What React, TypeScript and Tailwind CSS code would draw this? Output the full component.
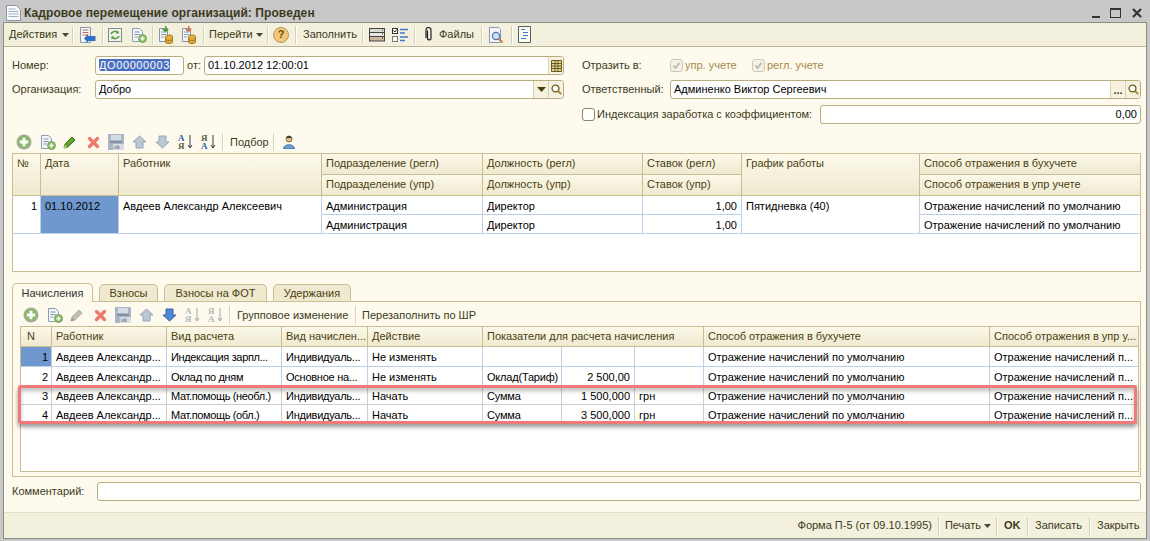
import React from "react";

const font = "font-['Liberation_Sans',Arial,sans-serif]";

function Sep() {
  return <div className="h-[18px] w-px shrink-0 bg-[#d8d2b4] shadow-[1px_0_0_#fff]" />;
}

function Caret() {
  return (
    <svg width="7" height="4" viewBox="0 0 7 4" className="ml-[3px] shrink-0">
      <path d="M0 0h7L3.5 4z" fill="#4a4430" />
    </svg>
  );
}

function AddIcon({ size = 16 }: { size?: number }) {
  return (
    <svg width={size} height={size} viewBox="0 0 16 16" className="shrink-0">
      <circle cx="8" cy="8" r="7.5" fill="#a5a99a" />
      <circle cx="8" cy="8" r="5.8" fill="#86bd5c" />
      <path d="M6.6 3.8h2.8v2.8h2.8v2.8H9.4v2.8H6.6V9.4H3.8V6.6h2.8z" fill="#fff" />
    </svg>
  );
}

function CopyIcon() {
  return (
    <svg width="16" height="16" viewBox="0 0 16 16" className="shrink-0">
      <path d="M1.5 1.5h7l3 3v10h-10z" fill="#f4f6fa" stroke="#8d9bb0" />
      <path d="M3.5 5h5M3.5 7.5h5M3.5 10h3" stroke="#7f93b4" />
      <circle cx="11.5" cy="11.5" r="4" fill="#79b94c" stroke="#8e9f80" />
      <path d="M11.5 9.3v4.4M9.3 11.5h4.4" stroke="#fff" strokeWidth="1.6" />
    </svg>
  );
}

function PencilIcon({ muted = false }: { muted?: boolean }) {
  return (
    <svg width="14" height="14" viewBox="0 0 14 14" className="shrink-0">
      <path d="M1 13l1-4 7-7 3 3-7 7z" fill={muted ? "#c0c0b8" : "#5fa32e"} stroke={muted ? "#a9a99f" : "#3f7d1f"} />
      <path d="M1 13l1-3 2 2z" fill={muted ? "#8f8f88" : "#e8dca0"} />
    </svg>
  );
}

function DeleteIcon() {
  return (
    <svg width="13" height="13" viewBox="0 0 13 13" className="shrink-0">
      <path d="M2.5 2.5l8 8M10.5 2.5l-8 8" stroke="#ee7a6c" strokeWidth="3.4" strokeLinecap="round" />
    </svg>
  );
}

function SaveIcon() {
  return (
    <svg width="16" height="16" viewBox="0 0 16 16" className="shrink-0">
      <rect x="0" y="0" width="16" height="16" fill="#a9b5c5" />
      <rect x="3" y="1" width="10" height="5" fill="#d5dbe3" />
      <rect x="2" y="7" width="12" height="2" fill="#8291a6" />
      <rect x="5" y="10" width="11" height="6" fill="#d6dbe0" />
      <text x="6" y="15" fontSize="5" fontWeight="bold" fill="#75828f">ok</text>
    </svg>
  );
}

function ArrowIcon({ dir, active = false }: { dir: "up" | "down"; active?: boolean }) {
  const fill = active ? "#4f86d6" : "#bcc6d4";
  return (
    <svg width="15" height="14" viewBox="0 0 15 14" className="shrink-0">
      {dir === "up" ? (
        <path d="M7.5 1L14 7h-3v6H4V7H1z" fill={fill} stroke="#9aa6b7" />
      ) : (
        <path d="M7.5 13L14 7h-3V1H4v6H1z" fill={fill} stroke={active ? "#3565ad" : "#9aa6b7"} />
      )}
    </svg>
  );
}

function SortIcon({ reverse = false, muted = false }: { reverse?: boolean; muted?: boolean }) {
  const top = muted ? "text-[#b4b8bd]" : reverse ? "text-[#5a5a3a]" : "text-[#2b5ea8]";
  const bottom = muted ? "text-[#b4b8bd]" : reverse ? "text-[#2b5ea8]" : "text-[#5a5a3a]";
  return (
    <div className="relative flex h-[17px] w-[15px] shrink-0 flex-col font-['Liberation_Serif',serif] text-[9px] font-bold leading-[8px]">
      <span className={top}>{reverse ? "Я" : "А"}</span>
      <span className={bottom}>{reverse ? "А" : "Я"}</span>
      <svg width="6" height="15" viewBox="0 0 6 15" className="absolute right-0 top-px">
        <path d="M3 0v13M1 10l2 3 2-3" stroke={muted ? "#a8a8a0" : "#3d3d3d"} fill="none" />
      </svg>
    </div>
  );
}

function LookupIcon() {
  return (
    <svg width="11" height="11" viewBox="0 0 11 11">
      <circle cx="4.5" cy="4.5" r="3.4" fill="#fff" stroke="#6a5a18" strokeWidth="1.3" />
      <path d="M7 7l3.2 3.2" stroke="#a8862c" strokeWidth="1.8" />
    </svg>
  );
}

function DocArrowIcon() {
  return (
    <svg width="17" height="18" viewBox="0 0 17 18" className="shrink-0">
      <path d="M1.5 1.5h10v15h-10z" fill="#f6f7fb" stroke="#8796ae" />
      <path d="M3.5 4h6M3.5 6.5h6M3.5 9h6" stroke="#c26a50" />
      <path d="M16.5 11v5H9v2l-4-4.500 4-4.500v2z" fill="#2f6fc4" transform="translate(0 -1)" />
    </svg>
  );
}

function RefreshIcon() {
  return (
    <svg width="14" height="14" viewBox="0 0 14 14" className="shrink-0">
      <rect x="0.5" y="0.5" width="13" height="13" fill="#f3f2ea" stroke="#7f8b99" />
      <path d="M3 6a4 4 0 017-1M11 8a4 4 0 01-7 1" stroke="#4e9a35" strokeWidth="1.5" fill="none" />
      <path d="M10.500 2.500v3h-3M3.500 11.500v-3h3" fill="#4e9a35" />
    </svg>
  );
}

function DbDocIcon({ color }: { color: string }) {
  return (
    <svg width="15" height="18" viewBox="0 0 15 18" className="shrink-0">
      <path d="M1.500 2.500h8v13h-8z" fill="#f3f5f9" stroke="#8a97a8" />
      <path d="M3 6h5M3 8.500h5M3 11h3" stroke="#8da0bb" />
      <path d="M7 0v3H4l3.500 3.500L11 3H8.500V0z" fill={color} />
      <ellipse cx="11" cy="10.500" rx="3.500" ry="1.500" fill="#e9b64a" stroke="#a87b22" />
      <path d="M7.500 10.500v5.500c0 2 7 2 7 0v-5.500" fill="#e0a93c" stroke="#a87b22" />
      <path d="M7.500 13c0 2 7 2 7 0" fill="none" stroke="#a87b22" />
    </svg>
  );
}

function HelpIcon() {
  return (
    <div className="flex h-[16px] w-[16px] shrink-0 items-center justify-center rounded-full border border-[#b29a5c] bg-[#f2c777] text-[11px] font-bold leading-none text-[#6a4d10]">
      ?
    </div>
  );
}

function ListIcon() {
  return (
    <svg width="16" height="16" viewBox="0 0 16 16" className="shrink-0">
      <rect x="0.5" y="1.500" width="15" height="4" fill="#d9d9d4" stroke="#444" />
      <rect x="0.5" y="5.500" width="15" height="4" fill="#e8e8e2" stroke="#444" />
      <rect x="0.5" y="9.500" width="15" height="4.500" fill="#c9b99a" stroke="#444" />
      <path d="M13 3h1M13 7h1M13 11h1" stroke="#222" />
    </svg>
  );
}

function CheckListIcon() {
  return (
    <svg width="17" height="16" viewBox="0 0 17 16" className="shrink-0">
      <rect x="0.5" y="1.500" width="5" height="5" fill="#fff" stroke="#333" />
      <path d="M1.500 3.500l1.300 1.500 2-2.500" stroke="#111" fill="none" />
      <rect x="0.5" y="9.500" width="5" height="5" fill="#fff" stroke="#777" />
      <path d="M8 2.500h8M8 6h5M8 10h8M8 13.500h5" stroke="#3f79c9" strokeWidth="1.500" />
    </svg>
  );
}

function ClipIcon() {
  return (
    <svg width="8" height="15" viewBox="0 0 8 15" className="shrink-0">
      <path d="M2.500 3.500v8a1.800 1.800 0 003.500 0V3a2.500 2.500 0 00-5 0v8" fill="none" stroke="#222" strokeWidth="1.200" />
    </svg>
  );
}

function PreviewIcon() {
  return (
    <svg width="16" height="18" viewBox="0 0 16 18" className="shrink-0">
      <path d="M1.500 1.500h9l2 2v13h-11z" fill="#f6f7fb" stroke="#8796ae" />
      <circle cx="8" cy="10" r="3.600" fill="#cfe3f7" stroke="#4a77ad" strokeWidth="1.200" />
      <path d="M10.500 12.500l4 4" stroke="#c67c3c" strokeWidth="2" />
    </svg>
  );
}

function OutlineIcon() {
  return (
    <svg width="13" height="17" viewBox="0 0 13 17" className="shrink-0">
      <path d="M0.500 0.500h12v16h-12z" fill="#fbfbf7" stroke="#55605f" />
      <path d="M3 3.500h4M5 6.500h5M5 9.500h5M3 12.500h5" stroke="#3f79c9" />
    </svg>
  );
}

function PersonIcon() {
  return (
    <svg width="12" height="14" viewBox="0 0 12 14" className="shrink-0">
      <circle cx="6" cy="4" r="3" fill="#e6b98a" stroke="#7d6a4a" />
      <path d="M3 3c1-2.500 5-2.500 6 0z" fill="#3a3220" />
      <path d="M0.500 13.500c0-5 11-5 11 0z" fill="#6f9fd4" stroke="#4f7fb8" />
    </svg>
  );
}

function Field({
  className = "",
  align = "left",
  children,
  selected = false,
  buttons,
}: {
  className?: string;
  align?: "left" | "right";
  children?: React.ReactNode;
  selected?: boolean;
  buttons?: React.ReactNode;
}) {
  return (
    <div className={`flex h-[19px] items-stretch overflow-hidden rounded-[3px] border border-[#b8ad7f] bg-white text-[11px] leading-[17px] text-black ${className}`}>
      <div className={`min-w-0 flex-1 truncate px-[3px] ${align === "right" ? "text-right" : ""}`}>
        {selected ? <span className="bg-[#4a6fc0] tracking-[0.6px] text-white">{children}</span> : children}
      </div>
      {buttons}
    </div>
  );
}

function FieldButton({ children }: { children: React.ReactNode }) {
  return (
    <div className="flex w-[15px] shrink-0 items-center justify-center border-l border-[#d8d2b4] bg-[#f6f2df]">
      {children}
    </div>
  );
}

function Check({ checked = false, disabled = false }: { checked?: boolean; disabled?: boolean }) {
  return (
    <div className={`flex h-[13px] w-[13px] shrink-0 items-center justify-center rounded-[3px] border ${disabled ? "border-[#cfcab4] bg-[#f3f1e6]" : "border-[#8b8462] bg-white"}`}>
      {checked && (
        <svg width="9" height="9" viewBox="0 0 9 9">
          <path d="M1.500 4.500l2 2.500 4-5" stroke="#b5b5ab" strokeWidth="1.500" fill="none" />
        </svg>
      )}
    </div>
  );
}

function ItemToolbar({ lower = false }: { lower?: boolean }) {
  return (
    <div className={`flex items-center ${lower ? "h-[24px] pl-[3px] pt-[2px]" : "h-[22px] pl-[4px]"}`}>
      <AddIcon />
      <div className="ml-2"><CopyIcon /></div>
      <div className="ml-[7px]"><PencilIcon muted={lower} /></div>
      <div className="ml-[10px]"><DeleteIcon /></div>
      <div className="ml-2"><SaveIcon /></div>
      <div className="ml-2"><ArrowIcon dir="up" /></div>
      <div className="ml-2"><ArrowIcon dir="down" active={lower} /></div>
      <div className="ml-2"><SortIcon muted={lower} /></div>
      <div className="ml-2"><SortIcon reverse muted={lower} /></div>
      <div className="ml-[6px]"><Sep /></div>
      {lower ? (
        <>
          <span className="ml-[7px] w-[112px] text-[11px] text-[#3a3a20]">Групповое изменение</span>
          <div className="ml-[6px]"><Sep /></div>
          <span className="ml-[6px] text-[11px] text-[#3a3a20]">Перезаполнить по ШР</span>
        </>
      ) : (
        <>
          <span className="ml-[7px] w-[38px] text-[11px] text-[#3a3a20]">Подбор</span>
          <div className="ml-[5px]"><Sep /></div>
          <div className="ml-[9px]"><PersonIcon /></div>
        </>
      )}
    </div>
  );
}

function Head({ className = "", children }: { className?: string; children?: React.ReactNode }) {
  return (
    <div className={`truncate border-r border-b border-[#c9be92] bg-gradient-to-b from-[#fcf9ea] to-[#efe9cf] pl-1 text-[11px] leading-[19px] text-[#4a3f10] ${className}`}>
      {children}
    </div>
  );
}

function Cell({ className = "", children }: { className?: string; children?: React.ReactNode }) {
  return (
    <div className={`overflow-hidden whitespace-nowrap border-r border-b border-[#bdd0e8] bg-white pl-1 pr-1 text-[11px] leading-[20px] text-black ${className}`}>
      {children}
    </div>
  );
}

const upperRows = [
  ["Подразделение (регл)", "Должность (регл)", "Ставок (регл)"],
  ["Подразделение (упр)", "Должность (упр)", "Ставок (упр)"],
];

const lowerRows = [
  { n: "1", kind: "Индексация зарпл...", accr: "Индивидуаль...", act: "Не изменять", ind: "", sum: "", cur: "" },
  { n: "2", kind: "Оклад по дням", accr: "Основное на...", act: "Не изменять", ind: "Оклад(Тариф)", sum: "2 500,00", cur: "" },
  { n: "3", kind: "Мат.помощь (необл.)", accr: "Индивидуаль...", act: "Начать", ind: "Сумма", sum: "1 500,000", cur: "грн" },
  { n: "4", kind: "Мат.помощь (обл.)", accr: "Индивидуаль...", act: "Начать", ind: "Сумма", sum: "3 500,000", cur: "грн" },
];

export default function App() {
  return (
    <div className={`flex h-[541px] w-[1150px] flex-col overflow-hidden bg-[#c8c8c8] px-[3px] pb-[2px] ${font}`}>
      <div className="flex h-[22px] shrink-0 items-center pt-[3px]">
        <svg width="15" height="16" viewBox="0 0 15 16" className="ml-[3px] shrink-0">
          <path d="M0.500 0.500h10l4 4v11h-14z" fill="#f8f9fb" stroke="#8a97a8" />
          <path d="M2.500 4h7M2.500 6.500h10M2.500 9h10M2.500 11.500h10" stroke="#9fb0c6" />
        </svg>
        <span className="ml-[3px] text-[12px] font-bold tracking-[0.08px] text-[#3d3a20]">Кадровое перемещение организаций: Проведен</span>
        <div className="ml-auto mr-[5px] flex items-center gap-[10px]">
          <div className="mt-[8px] h-[2px] w-[8px] bg-[#333]" />
          <div className="h-[10px] w-[11px] border border-t-2 border-[#333]" />
          <svg width="10" height="10" viewBox="0 0 10 10" className="ml-px">
            <path d="M1 1l8 8M9 1l-8 8" stroke="#333" strokeWidth="2.200" />
          </svg>
        </div>
      </div>

      <div className="flex min-h-0 flex-1 flex-col border border-[#8c8c80] bg-[#fefaee]">
        <div className="flex h-[24px] shrink-0 items-center border-b border-[#bdb594] bg-[#f4f0de] pl-[5px] text-[11px] text-[#3a3a20]">
          <span className="w-[50px] shrink-0">Действия</span>
          <Caret />
          <div className="ml-[3px]"><Sep /></div>
          <div className="ml-[6px]"><DocArrowIcon /></div>
          <div className="ml-[6px]"><Sep /></div>
          <div className="ml-[5px]"><RefreshIcon /></div>
          <div className="ml-[9px]"><CopyIcon /></div>
          <div className="ml-[5px]"><Sep /></div>
          <div className="ml-[5px]"><DbDocIcon color="#4e9a35" /></div>
          <div className="ml-[8px]"><DbDocIcon color="#d9744f" /></div>
          <div className="ml-[7px]"><Sep /></div>
          <span className="ml-[5px] w-[44px] shrink-0">Перейти</span>
          <Caret />
          <div className="ml-[4px]"><Sep /></div>
          <div className="ml-[5px]"><HelpIcon /></div>
          <div className="ml-[6px]"><Sep /></div>
          <span className="ml-[7px] w-[53px] shrink-0">Заполнить</span>
          <div className="ml-[6px]"><Sep /></div>
          <div className="ml-[6px]"><ListIcon /></div>
          <div className="ml-[7px]"><CheckListIcon /></div>
          <div className="ml-[5px]"><Sep /></div>
          <div className="ml-[10px]"><ClipIcon /></div>
          <span className="ml-[6px] w-[36px] shrink-0">Файлы</span>
          <div className="ml-[6px]"><Sep /></div>
          <div className="ml-[6px]"><PreviewIcon /></div>
          <div className="ml-[7px]"><Sep /></div>
          <div className="ml-[6px]"><OutlineIcon /></div>
        </div>

        <div className="flex shrink-0 pl-[8px] pr-[5px] pt-[9px] text-[11px] text-[#3a3a20]">
          <div className="w-[552px] shrink-0">
            <div className="flex h-[19px] items-center">
              <span className="w-[83px] shrink-0">Номер:</span>
              <Field selected className="w-[89px]">ДО00000003</Field>
              <span className="ml-[3px] w-[17px] shrink-0">от:</span>
              <Field
                className="w-[360px]"
                buttons={
                  <FieldButton>
                    <svg width="11" height="12" viewBox="0 0 11 12">
                      <path d="M0.500 0.500h10v11h-10zM0.500 3.500h10M0.500 6h10M0.500 8.500h10M4 0.500v11M7 0.500v11" fill="#e7d9a4" stroke="#6a5a18" />
                    </svg>
                  </FieldButton>
                }
              >
                01.10.2012 12:00:01
              </Field>
            </div>
            <div className="mt-[5px] flex h-[19px] items-center">
              <span className="w-[83px] shrink-0">Организация:</span>
              <Field
                className="w-[469px]"
                buttons={
                  <>
                    <FieldButton>
                      <svg width="9" height="5" viewBox="0 0 9 5"><path d="M0 0h9L4.500 5z" fill="#4a3f10" /></svg>
                    </FieldButton>
                    <FieldButton><LookupIcon /></FieldButton>
                  </>
                }
              >
                Добро
              </Field>
            </div>
          </div>
          <div className="ml-[18px] flex-1">
            <div className="flex h-[19px] items-center">
              <span className="w-[88px] shrink-0">Отразить в:</span>
              <Check checked disabled />
              <span className="ml-[2px] w-[67px] shrink-0 text-[#a68a4a]">упр. учете</span>
              <Check checked disabled />
              <span className="ml-[2px] text-[#a68a4a]">регл. учете</span>
            </div>
            <div className="mt-[5px] flex h-[19px] items-center">
              <span className="w-[88px] shrink-0">Ответственный:</span>
              <Field
                className="flex-1"
                buttons={
                  <>
                    <FieldButton><span className="mt-[2px] text-[11px] font-bold leading-none text-[#4a3f10]">...</span></FieldButton>
                    <FieldButton><LookupIcon /></FieldButton>
                  </>
                }
              >
                Админенко Виктор Сергеевич
              </Field>
            </div>
            <div className="mt-[6px] flex h-[19px] items-center">
              <Check />
              <span className="ml-[2px] w-[223px] shrink-0">Индексация заработка с коэффициентом:</span>
              <Field className="flex-1" align="right">0,00</Field>
            </div>
          </div>
        </div>

        <div className="ml-[8px] mr-[5px] mt-[7px] flex shrink-0 flex-col">
          <ItemToolbar />
          <div className="h-[119px] shrink-0 border border-[#c9be92] bg-white">
            <div className="grid grid-cols-[28px_78px_203px_161px_160px_99px_178px_1fr] grid-rows-[21px_21px_19px_19px]">
              <Head className="row-span-2">№</Head>
              <Head className="row-span-2">Дата</Head>
              <Head className="row-span-2">Работник</Head>
              {upperRows[0].map((t) => (
                <Head key={t}>{t}</Head>
              ))}
              <Head className="row-span-2">График работы</Head>
              <Head className="border-r-0">Способ отражения в бухучете</Head>
              {upperRows[1].map((t) => (
                <Head key={t}>{t}</Head>
              ))}
              <Head className="border-r-0">Способ отражения в упр учете</Head>

              <Cell className="row-span-2 pr-[3px] text-right">1</Cell>
              <Cell className="row-span-2 !bg-[#6f98cf] text-[#e8eefa]">01.10.2012</Cell>
              <Cell className="row-span-2">Авдеев Александр Алексеевич</Cell>
              <Cell>Администрация</Cell>
              <Cell>Директор</Cell>
              <Cell className="text-right">1,00</Cell>
              <Cell className="row-span-2">Пятидневка (40)</Cell>
              <Cell className="border-r-0">Отражение начислений по умолчанию</Cell>
              <Cell>Администрация</Cell>
              <Cell>Директор</Cell>
              <Cell className="text-right">1,00</Cell>
              <Cell className="border-r-0">Отражение начислений по умолчанию</Cell>
            </div>
          </div>
        </div>

        <div className="ml-[8px] mr-[5px] mt-[11px] flex shrink-0 flex-col">
          <div className="flex h-[18px] items-end gap-[6px] text-[11px] leading-[17px] text-[#4a3f10]">
            <div className="relative z-10 mb-[-1px] h-[19px] w-[81px] rounded-t-[5px] border border-b-0 border-[#c9be92] bg-[#fefaee] pt-px text-center text-[#333]">Начисления</div>
            <div className="h-[17px] w-[59px] rounded-t-[5px] border border-b-0 border-[#c9be92] bg-[#efe9cf] text-center">Взносы</div>
            <div className="h-[17px] w-[103px] rounded-t-[5px] border border-b-0 border-[#c9be92] bg-[#efe9cf] text-center">Взносы на ФОТ</div>
            <div className="h-[17px] w-[78px] rounded-t-[5px] border border-b-0 border-[#c9be92] bg-[#efe9cf] text-center">Удержания</div>
          </div>
          <div className="h-[176px] border border-[#c9be92] pl-[7px] pr-px">
            <ItemToolbar lower />
            <div className="relative h-[146px] border border-[#c9be92] bg-white">
              <div className="grid grid-cols-[31px_115px_115px_86px_115px_79px_73px_69px_286px_1fr] grid-rows-[20px_20px_19px_19px_19px]">
                <Head className="pl-[6px]">N</Head>
                <Head>Работник</Head>
                <Head>Вид расчета</Head>
                <Head>Вид начислен...</Head>
                <Head>Действие</Head>
                <Head className="col-span-3">Показатели для расчета начисления</Head>
                <Head>Способ отражения в бухучете</Head>
                <Head className="border-r-0">Способ отражения в упр у...</Head>
                {lowerRows.map((r, i) => {
                  const line = i >= 2 ? "!border-[#cfcfcf]" : i === 1 ? "!border-b-[#d5d5d5]" : "";
                  return (
                    <React.Fragment key={r.n}>
                      <Cell className={`pr-[3px] text-right ${line} ${i === 0 ? "!bg-[#6f98cf] text-[#e8eefa]" : ""}`}>{r.n}</Cell>
                      <Cell className={line}>Авдеев Александр...</Cell>
                      <Cell className={`tracking-[-0.35px] ${line}`}>{r.kind}</Cell>
                      <Cell className={`tracking-[-0.25px] ${line}`}>{r.accr}</Cell>
                      <Cell className={line}>{r.act}</Cell>
                      <Cell className={`tracking-[-0.2px] ${line}`}>{r.ind}</Cell>
                      <Cell className={`text-right ${line}`}>{r.sum}</Cell>
                      <Cell className={line}>{r.cur}</Cell>
                      <Cell className={line}>Отражение начислений по умолчанию</Cell>
                      <Cell className={`border-r-0 ${line}`}>Отражение начислений п...</Cell>
                    </React.Fragment>
                  );
                })}
              </div>
              <div className="absolute left-[-3px] top-[58px] h-[39px] w-[1119px] rounded-[3px] border-[3px] border-[#f07a78] shadow-[0_3px_4px_rgba(0,0,0,0.4),inset_0_3px_4px_rgba(0,0,0,0.25)]" />
            </div>
          </div>
        </div>

        <div className="ml-[8px] mr-[5px] mt-[5px] flex shrink-0 items-center text-[11px] text-[#3a3a20]">
          <span className="w-[85px] shrink-0">Комментарий:</span>
          <Field className="flex-1" />
        </div>

        <div className="mt-auto flex h-[26px] shrink-0 items-center justify-end border-t border-[#e4dfc6] bg-[#f4f0de] pr-[6px] text-[11px] text-[#3a3a20]">
          <span>Форма П-5 (от 09.10.1995)</span>
          <div className="ml-[6px]"><Sep /></div>
          <span className="ml-[6px]">Печать</span>
          <Caret />
          <div className="ml-[5px]"><Sep /></div>
          <span className="ml-[7px] w-[16px] font-bold">OK</span>
          <div className="ml-[7px]"><Sep /></div>
          <span className="ml-[7px] w-[47px]">Записать</span>
          <div className="ml-[7px]"><Sep /></div>
          <span className="ml-[7px] w-[43px]">Закрыть</span>
        </div>
      </div>
    </div>
  );
}
